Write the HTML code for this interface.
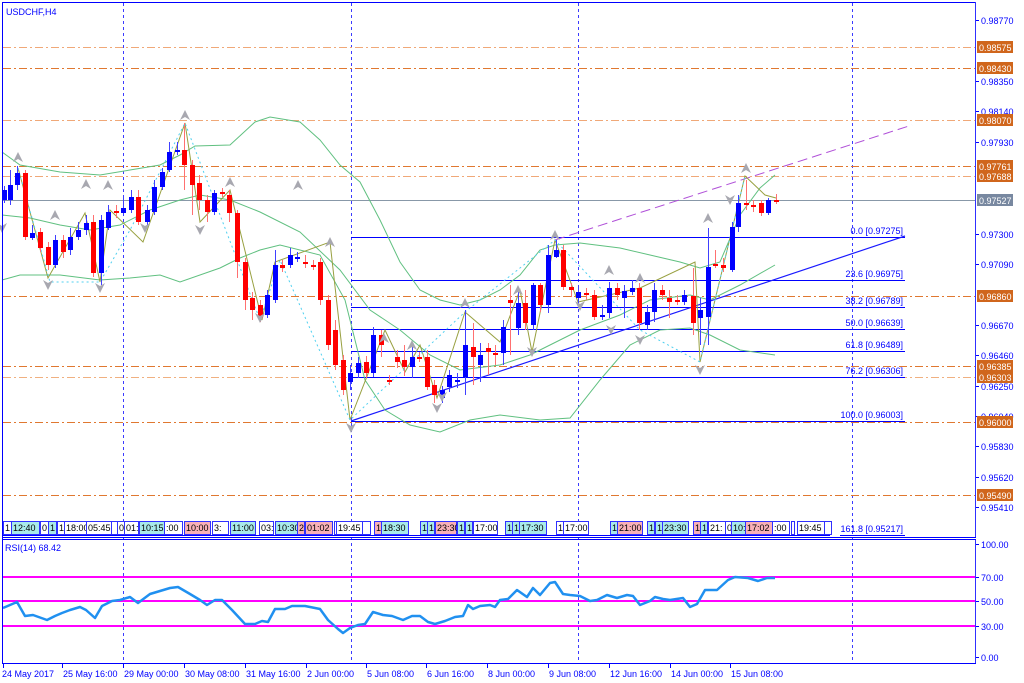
<!DOCTYPE html>
<html><head><meta charset="utf-8"><style>
html,body{margin:0;padding:0;background:#fff;width:1024px;height:683px;overflow:hidden}
svg{display:block;font-family:"Liberation Sans",Tahoma,sans-serif}
</style></head><body>
<svg id="s" width="1024" height="683" viewBox="0 0 1024 683" xmlns="http://www.w3.org/2000/svg">
<rect width="1024" height="683" fill="#fff"/>
<g id="bg"></g>
<g id="fg"></g>
<!-- frames -->
<line x1="2.5" y1="2" x2="2.5" y2="664" stroke="#0000ff"/>
<line x1="2" y1="2.5" x2="976" y2="2.5" stroke="#0000ff"/>
<line x1="975.5" y1="2" x2="975.5" y2="538" stroke="#3030ff"/>
<line x1="975.5" y1="539" x2="975.5" y2="664" stroke="#3030ff"/>
<line x1="2" y1="537.5" x2="976" y2="537.5" stroke="#0000ff"/>
<line x1="2" y1="539.5" x2="976" y2="539.5" stroke="#0000ff"/>
<line x1="2" y1="663.5" x2="976" y2="663.5" stroke="#0000ff"/>
<text x="6" y="15" font-size="9" fill="#0000ff">USDCHF,H4</text>
<text x="5" y="551" font-size="9" fill="#0000ff">RSI(14) 68.42</text>
</svg>
<script>
var NS="http://www.w3.org/2000/svg";
var bg=document.getElementById('bg'),fg=document.getElementById('fg');
function el(p,t,a,txt){var e=document.createElementNS(NS,t);for(var k in a)e.setAttribute(k,a[k]);if(txt!==undefined)e.textContent=txt;p.appendChild(e);return e;}
function pl(p,pts,a){a.points=pts.map(function(q){return q.join(',')}).join(' ');a.fill='none';return el(p,'polyline',a);}
// vertical dashed
[123,351,578,852].forEach(function(x){el(bg,'line',{x1:x+.5,y1:3,x2:x+.5,y2:663,stroke:'#3b3bff','stroke-dasharray':'3,3'});});
// horizontal orange lines
[[47,'0.98575','#f0a878'],[68,'0.98430','#e07830'],[120,'0.98070','#f0a878'],[166,'0.97761','#e07830'],[176,'0.97688','#f0a878'],[296,'0.96860','#e07830'],[366,'0.96385','#e07830'],[377,'0.96303','#f0b080'],[422,'0.96000','#e07830'],[495,'0.95490','#e07830']].forEach(function(h){
 el(bg,'line',{x1:3,y1:h[0]+.5,x2:975,y2:h[0]+.5,stroke:h[2],'stroke-dasharray':'8,3,2,3'});
});
// gray price line
el(bg,'line',{x1:3,y1:200.5,x2:975,y2:200.5,stroke:'#8898a8'});
// axis labels main
[[20,'0.98770'],[81,'0.98350'],[111,'0.98140'],[142,'0.97930'],[234,'0.97300'],[264,'0.97090'],[325,'0.96670'],[355,'0.96460'],[386,'0.96250'],[416,'0.96040'],[446,'0.95830'],[477,'0.95620'],[507,'0.95410']].forEach(function(a){
 el(fg,'line',{x1:975,y1:a[0]+.5,x2:979,y2:a[0]+.5,stroke:'#0000ff'});
 el(fg,'text',{x:981,y:a[0]+4,'font-size':'9',fill:'#0000ff'},a[1]);
});
[[47,'0.98575'],[68,'0.98430'],[120,'0.98070'],[166,'0.97761'],[176,'0.97688'],[296,'0.96860'],[366,'0.96385'],[377,'0.96303'],[422,'0.96000'],[495,'0.95490']].forEach(function(a){
 el(fg,'rect',{x:977,y:a[0]-6,width:36,height:12,fill:'#d0661c'});
 el(fg,'text',{x:979,y:a[0]+4,'font-size':'9',fill:'#fff'},a[1]);
});
el(fg,'rect',{x:977,y:194,width:36,height:12,fill:'#7888a0'});
el(fg,'text',{x:979,y:204,'font-size':'9',fill:'#fff'},'0.97527');
// fib lines
[[237,'0.0 [0.97275]'],[280,'23.6 [0.96975]'],[307,'38.2 [0.96789]'],[329,'50.0 [0.96639]'],[351,'61.8 [0.96489]'],[377,'76.2 [0.96306]'],[421,'100.0 [0.96003]']].forEach(function(f){
 el(bg,'line',{x1:351,y1:f[0]+.5,x2:905,y2:f[0]+.5,stroke:'#0000ff'});
 el(bg,'text',{x:903,y:f[0]-3,'font-size':'9',fill:'#0000ff','text-anchor':'end'},f[1]);
});
el(bg,'text',{x:903,y:532,'font-size':'9',fill:'#0000ff','text-anchor':'end'},'161.8 [0.95217]');
el(bg,'line',{x1:840,y1:535.5,x2:905,y2:535.5,stroke:'#0000ff'});
// trend lines
el(bg,'line',{x1:351,y1:421,x2:905,y2:236,stroke:'#1a1aff','stroke-width':1.2});
el(bg,'line',{x1:555,y1:240,x2:912,y2:125,stroke:'#b050d8','stroke-dasharray':'10,5'});
// bollinger
var bb='#60c080';
pl(bg,[[2,152],[20,165],[60,172],[100,175],[130,170],[160,165],[180,155],[195,146],[230,145],[255,122],[270,117],[300,122],[320,140],[340,165],[360,182],[380,220],[400,262],[420,290],[440,300],[460,305],[480,300],[500,290],[520,275],[540,250],[555,245],[580,243],[620,248],[650,255],[680,262],[700,268],[720,262],[740,215],[760,188],[775,175]],{stroke:bb});
pl(bg,[[2,215],[30,218],[60,225],[90,230],[120,225],[150,210],[180,200],[200,195],[230,200],[260,212],[300,232],[340,270],[370,310],[400,330],[430,355],[460,370],[500,365],[530,355],[550,345],[580,330],[620,315],[650,300],[690,295],[710,300],[740,285],[775,265]],{stroke:bb});
pl(bg,[[2,280],[20,275],[60,275],[100,280],[130,278],[160,275],[180,282],[220,268],[240,258],[260,250],[280,245],[320,255],[345,300],[365,380],[385,410],[410,425],[440,432],[470,420],[500,415],[540,420],[570,418],[600,380],[630,345],[660,330],[690,328],[710,335],[740,350],[775,355]],{stroke:bb});
// zigzags
pl(bg,[[18,168],[48,278],[85,213],[100,282],[110,210],[143,242],[185,123],[200,222],[230,190],[262,320],[275,262],[330,242],[350,420],[385,330],[405,372],[420,345],[437,398],[465,312],[500,342],[520,290],[532,352],[555,240],[578,302],[640,288],[695,262],[700,362],[745,176],[765,195],[776,198]],{stroke:'#98a040'});
pl(bg,[[18,168],[50,282],[100,282],[130,230],[185,123],[260,320],[280,260],[350,420],[465,312],[555,240],[640,330],[700,362],[745,176]],{stroke:'#50d0f0','stroke-dasharray':'2,3'});
// candles [x,o,c,h,l]
var C=[[4,200,190,186,203],[10,200,185,170,205],[17,185,173,166,190],[25,173,237,170,240],[32,238,233,225,240],[40,232,248,228,252],[48,247,265,242,270],[55,265,240,235,268],[63,240,252,235,258],[70,250,237,228,255],[78,237,230,222,240],[86,230,223,215,235],[93,222,273,215,277],[101,273,220,215,285],[108,228,212,205,230],[116,211,213,205,218],[123,213,208,195,215],[131,210,197,190,213],[138,197,222,190,225],[147,222,210,205,225],[154,212,187,180,215],[162,187,172,168,190],[169,170,152,142,172],[177,152,150,142,155],[184,150,165,123,190],[192,165,185,160,215],[199,183,200,175,210],[207,200,212,195,222],[214,212,193,190,215],[222,192,194,188,197],[229,195,213,190,222],[237,213,262,210,278],[245,262,300,258,310],[252,298,310,292,320],[260,305,318,300,322],[267,315,295,290,318],[275,300,265,250,303],[282,265,268,260,272],[290,265,255,248,268],[297,258,257,252,262],[305,262,263,255,268],[313,265,266,260,270],[320,262,300,258,305],[328,300,345,295,350],[335,330,365,320,370],[343,360,390,355,395],
[350,382,373,365,390],[358,373,363,357,378],[366,362,373,356,378],[373,373,335,327,377],[381,335,345,330,357],[389,380,382,375,385],[397,357,362,350,368],[404,360,367,345,376],[412,367,357,345,378],[419,357,358,352,362],[427,357,387,350,390],[434,385,395,380,403],[442,398,390,386,403],[449,387,375,370,392],[457,381,380,373,388],[465,377,345,310,395],[473,347,357,323,385],[480,365,355,343,382],[488,348,352,343,375],[495,353,354,345,365],[503,353,327,320,365],[510,300,303,285,355],[518,328,303,288,335],[525,303,323,290,330],[533,325,285,283,330],[540,285,305,283,312],[548,305,255,245,313],[556,257,250,240,258],[563,250,287,245,290],[571,287,290,283,297],[578,298,292,285,305],[586,293,294,288,300],[594,295,317,290,320],[602,317,315,305,320],[609,313,288,282,318],[617,288,295,283,300],[624,298,291,285,318],[632,292,288,280,295],[639,288,323,283,330],[647,325,312,305,330],[654,312,290,283,322],[662,290,295,285,300],[669,298,302,290,318],[677,300,301,295,305],[684,302,295,290,305],[693,296,323,268,335],[700,318,310,298,345],[708,317,267,228,345],[715,264,266,250,268],[723,265,268,258,272],[732,270,227,222,272],[738,227,203,195,232],[746,203,204,180,210],[753,205,207,200,212],[761,203,213,200,216],[768,213,200,198,215],[776,200,201,194,204]];
C.forEach(function(c){
 var red=c[2]>c[1],col=red?'#ff0000':'#0000ff';
 el(fg,'line',{x1:c[0]+.5,y1:c[3],x2:c[0]+.5,y2:c[4],stroke:red?'#ff7070':'#4040ff'});
 var t=Math.min(c[1],c[2]),h=Math.max(2,Math.abs(c[2]-c[1]));
 el(fg,'rect',{x:c[0]-2,y:t,width:5,height:h,fill:col});
});
// fractal arrows
function up(x,y){el(fg,'path',{d:'M'+(x-5)+' '+(y+5)+' L'+x+' '+(y-5)+' L'+(x+5)+' '+(y+5)+' L'+x+' '+(y+2)+' Z',fill:'#a8a8b0'});}
function dn(x,y){el(fg,'path',{d:'M'+(x-5)+' '+(y-5)+' L'+x+' '+(y+5)+' L'+(x+5)+' '+(y-5)+' L'+x+' '+(y-2)+' Z',fill:'#a8a8b0'});}
[[18,157],[55,215],[86,184],[108,185],[185,115],[230,182],[298,185],[330,242],[384,338],[412,345],[465,303],[518,290],[555,235],[609,270],[640,278],[708,218],[746,168]].forEach(function(a){up(a[0],a[1]);});
[[2,228],[48,285],[100,288],[145,228],[200,230],[260,318],[351,428],[442,397],[437,408],[532,352],[580,306],[611,330],[640,340],[700,370],[730,200]].forEach(function(a){dn(a[0],a[1]);});
// label row
var L=[[3,8,'1','w'],[11,28,'12:40','c'],[39,2,'','w'],[40,8,'0','w'],[48,8,'1','c'],[57,7,'1','w'],[64,22,'18:00','w'],[86,25,'05:45','w'],[111,6,'','w'],[117,7,'0','w'],[124,14,'01:','w'],[139,25,'10:15','c'],[164,18,':00','w'],[184,26,'10:00','p'],[212,16,'3:','w'],[230,25,'11:00','c'],[259,14,'03:','w'],[275,22,'10:30','c'],[297,7,'2','p'],[305,27,'01:02','p'],[334,2,'','w'],[336,26,'19:45','w'],[362,8,'','w'],[374,7,'1','p'],[381,27,'18:30','c'],[420,7,'1','c'],[427,7,'1','c'],[435,21,'23:30','p'],[457,7,'1','c'],[465,7,'1','c'],[473,24,'17:00','w'],[505,7,'1','c'],[512,7,'1','c'],[519,27,'17:30','c'],[556,7,'1','w'],[563,25,'17:00','w'],[610,7,'1','c'],[617,25,'21:00','p'],[647,7,'1','c'],[655,7,'1','c'],[662,26,'23:30','c'],[693,7,'1','p'],[700,7,'1','c'],[708,17,'21:','w'],[725,6,'0','w'],[731,14,'10:','c'],[745,27,'17:02','p'],[772,17,':00','w'],[791,3,'','w'],[797,27,'19:45','w'],[824,7,'','w']];
var F={w:'#ffffff',c:'#a8eaea',p:'#f8b0b8'};
L.forEach(function(b){
 el(fg,'rect',{x:b[0]+.5,y:521.5,width:b[1],height:13,fill:F[b[3]],stroke:'#3030ff'});
 if(b[2])el(fg,'text',{x:b[0]+2,y:531,'font-size':'9',fill:'#000'},b[2]);
});
el(fg,'line',{x1:3,y1:535.5,x2:420,y2:535.5,stroke:'#0000ff'});
el(fg,'line',{x1:420,y1:535.5,x2:830,y2:535.5,stroke:'#0000ff'});
// RSI
[[577],[601],[626]].forEach(function(r){el(bg,'line',{x1:3,y1:r[0],x2:975,y2:r[0],stroke:'#ff00ff','stroke-width':2});});
[[544,'100.00'],[577,'70.00'],[601,'50.00'],[626,'30.00'],[657,'0.00']].forEach(function(a){
 el(fg,'line',{x1:975,y1:a[0]+.5,x2:979,y2:a[0]+.5,stroke:'#0000ff'});
 el(fg,'text',{x:981,y:a[0]+4,'font-size':'9',fill:'#0000ff'},a[1]);
});
pl(fg,[[3,608],[17,602],[25,616],[33,615],[47,620],[55,616],[62,613],[70,610],[80,607],[86,610],[95,618],[102,606],[112,601],[120,600],[130,597],[138,603],[150,594],[170,588],[178,587],[190,594],[200,600],[207,605],[215,600],[222,600],[232,610],[245,624],[255,624],[262,621],[268,622],[275,609],[285,609],[292,606],[305,606],[315,608],[320,609],[328,620],[338,629],[343,633],[350,628],[358,625],[365,624],[373,612],[383,615],[392,616],[403,620],[412,616],[420,616],[428,622],[435,624],[445,621],[455,617],[463,616],[468,605],[473,609],[480,606],[490,605],[495,607],[500,600],[508,599],[517,590],[527,597],[533,588],[540,595],[550,583],[555,582],[563,594],[570,595],[580,596],[590,601],[597,600],[607,595],[617,598],[627,595],[633,596],[640,605],[650,601],[655,597],[663,599],[670,600],[683,598],[690,607],[697,604],[705,590],[717,590],[728,580],[735,577],[748,578],[758,581],[767,578],[775,578]],{stroke:'#2090f0','stroke-width':2.5,'stroke-linejoin':'round'});
// dates
[[3,'24 May 2017'],[62,'25 May 16:00'],[123,'29 May 00:00'],[184,'30 May 08:00'],[245,'31 May 16:00'],[306,'2 Jun 00:00'],[366,'5 Jun 08:00'],[426,'6 Jun 16:00'],[487,'8 Jun 00:00'],[548,'9 Jun 08:00'],[609,'12 Jun 16:00'],[670,'14 Jun 00:00'],[730,'15 Jun 08:00']].forEach(function(d){
 el(fg,'line',{x1:d[0]+.5,y1:664,x2:d[0]+.5,y2:668,stroke:'#0000ff'});
 el(fg,'text',{x:d[0]+(d[0]==3?-1:1),y:677,'font-size':'9',fill:'#0000ff'},d[1]);
});
</script>
</body></html>
